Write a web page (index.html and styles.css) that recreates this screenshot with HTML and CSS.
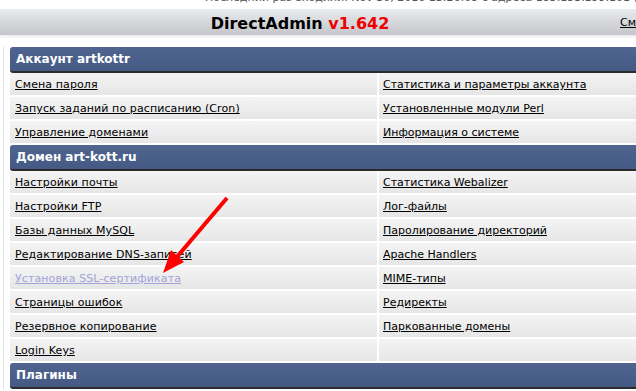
FILE: index.html
```html
<!DOCTYPE html>
<html lang="ru">
<head>
    <meta charset="UTF-8">
    <meta name="viewport" content="width=device-width, initial-scale=1.0">
    <title>DirectAdmin</title>
    <link rel="stylesheet" href="styles.css">
</head>
<body>

    <div class="lastlogin">
        <span>Последний раз входили: Nov 30, 2016 13:26:09 с адреса 185.153.199.101 (RU)</span>
    </div>

    <header class="topbar">
        <div class="title">DirectAdmin <span class="version">v1.642</span></div>
        <div class="toplinks"><a href="#">Сменить пароль</a></div>
    </header>

    <div class="panel">
        <div class="section-head">Аккаунт artkottr</div>
        <div class="menu">
            <div class="cell"><a href="#">Смена пароля</a></div>
            <div class="cell"><a href="#">Статистика и параметры аккаунта</a></div>
            <div class="cell"><a href="#">Запуск заданий по расписанию (Cron)</a></div>
            <div class="cell"><a href="#">Установленные модули Perl</a></div>
            <div class="cell"><a href="#">Управление доменами</a></div>
            <div class="cell"><a href="#">Информация о системе</a></div>
        </div>

        <div class="section-head">Домен art-kott.ru</div>
        <div class="menu">
            <div class="cell"><a href="#">Настройки почты</a></div>
            <div class="cell"><a href="#">Статистика Webalizer</a></div>
            <div class="cell"><a href="#">Настройки FTP</a></div>
            <div class="cell"><a href="#">Лог-файлы</a></div>
            <div class="cell"><a href="#">Базы данных MySQL</a></div>
            <div class="cell"><a href="#">Паролирование директорий</a></div>
            <div class="cell"><a href="#">Редактирование DNS-записей</a></div>
            <div class="cell"><a href="#">Apache Handlers</a></div>
            <div class="cell"><a href="#" class="visited">Установка SSL-сертификата</a></div>
            <div class="cell"><a href="#">MIME-типы</a></div>
            <div class="cell"><a href="#">Страницы ошибок</a></div>
            <div class="cell"><a href="#">Редиректы</a></div>
            <div class="cell"><a href="#">Резервное копирование</a></div>
            <div class="cell"><a href="#">Паркованные домены</a></div>
            <div class="cell"><a href="#">Login Keys</a></div>
            <div class="cell"></div>
        </div>

        <div class="section-head">Плагины</div>
    </div>

    <!-- pointer drawn over the screenshot -->
    <svg class="arrow" width="636" height="391" viewBox="0 0 636 391">
        <line x1="227" y1="198" x2="176" y2="258" stroke="#ff0000" stroke-width="4"/>
        <polygon points="163,273 184,262 171,250" fill="#ff0000"/>
    </svg>

</body>
</html>
```

FILE: styles.css
```css
body {
    margin: 0;
    padding: 0;
    background-color: white;
    color: black;
    font-family: "DejaVu Sans", Verdana, sans-serif;
    font-size: 11px;
    overflow: hidden;
}

a {
    color: black;
}

.lastlogin {
    height: 9px;
    overflow: hidden;
    padding-left: 205px;
    white-space: nowrap;
    color: #555;
}

.lastlogin span {
    display: block;
    margin-top: -9px;
}

.topbar {
    display: flex;
    align-items: center;
    height: 26px;
    background: linear-gradient(#e9eaed, #c4c6cb);
    box-shadow: 0 2px 2px rgba(0, 0, 0, 0.08);
    white-space: nowrap;
    overflow: hidden;
}

.title {
    width: 600px;
    flex-shrink: 0;
    text-align: center;
    font-size: 16px;
    font-weight: bold;
    padding-top: 2px;
}

.version {
    color: #ee0000;
}

.toplinks {
    padding-left: 20px;
    font-size: 11px;
}

.panel {
    margin: 12px 0 0 3px;
    padding-left: 6px;
    border-left: 1px solid #e2e2e2;
}

.section-head {
    height: 24px;
    line-height: 24px;
    padding-left: 6px;
    background: linear-gradient(#4f6590, #445a84);
    border-bottom: 2px solid #2c2c2c;
    border-radius: 3px 0 0 3px;
    color: white;
    font-weight: bold;
    font-size: 12px;
}

.menu {
    display: grid;
    grid-template-columns: 367px 1fr;
    gap: 2px;
    padding-bottom: 2px;
    background-color: white;
}

.cell {
    height: 22px;
    line-height: 23px;
    padding-left: 5px;
    background: linear-gradient(#f4f4f4, #e6e6e6);
    white-space: nowrap;
    letter-spacing: 0.1px;
}

.cell:nth-child(even) {
    padding-left: 4px;
    letter-spacing: 0;
}

.cell a.visited {
    color: #a3a3d9;
}

.arrow {
    position: absolute;
    top: 0;
    left: 0;
    pointer-events: none;
}
```
